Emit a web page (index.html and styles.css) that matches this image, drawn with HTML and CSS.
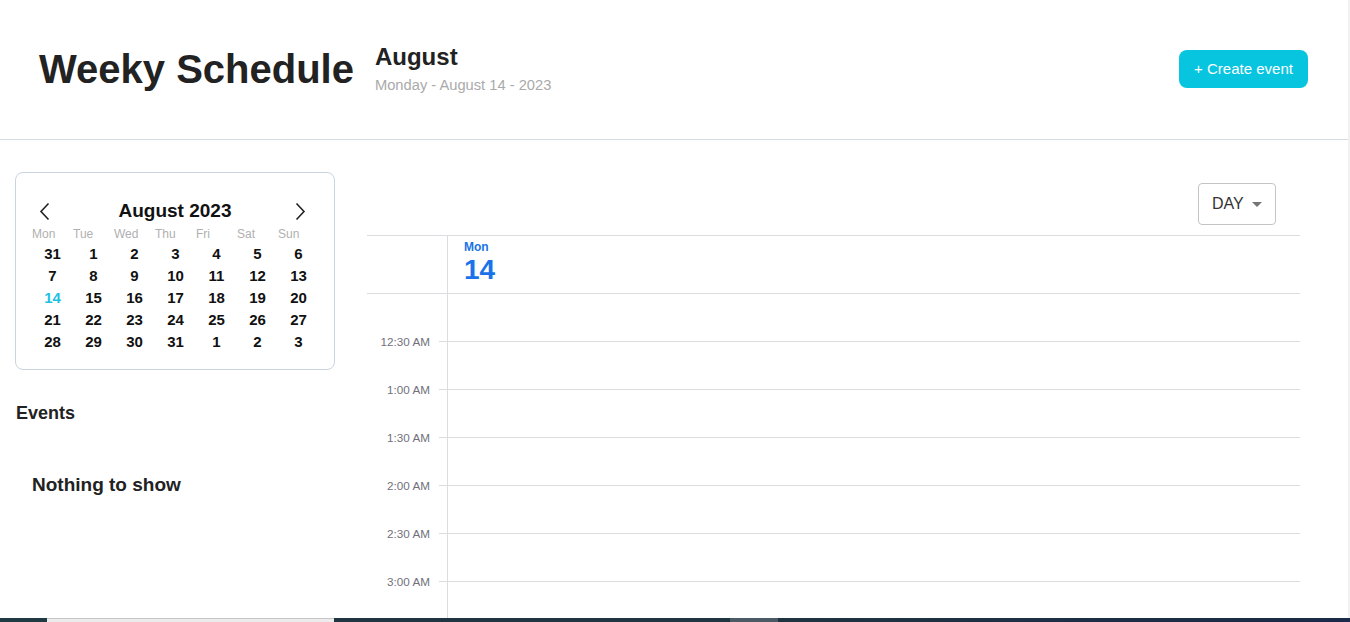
FILE: index.html
```html
<!DOCTYPE html>
<html lang="en">
<head>
<meta charset="utf-8">
<title>Weeky Schedule</title>
<link rel="stylesheet" href="styles.css">
</head>
<body>
<div class="app">
  <div class="screen">
    <div class="page">
      <header class="topbar">
        <div class="brand">
          <h1 class="title">Weeky Schedule</h1>
          <div class="date-block">
            <div class="month">August</div>
            <div class="date-sub">Monday - August 14 - 2023</div>
          </div>
        </div>
        <button class="create-btn">+ Create event</button>
      </header>
      <div class="content">
        <aside class="sidebar">
          <div class="mini-cal">
            <div class="cal-nav">
              <button class="nav-btn" aria-label="Previous month">
                <svg width="11" height="19" viewBox="0 0 11 19"><polyline points="9.5,1.5 2,9.5 9.5,17.5" fill="none" stroke="#222" stroke-width="1.6"/></svg>
              </button>
              <div class="cal-title">August 2023</div>
              <button class="nav-btn" aria-label="Next month">
                <svg width="11" height="19" viewBox="0 0 11 19"><polyline points="1.5,1.5 9,9.5 1.5,17.5" fill="none" stroke="#222" stroke-width="1.6"/></svg>
              </button>
            </div>
            <div class="cal-grid">
              <span class="wd">Mon</span><span class="wd">Tue</span><span class="wd">Wed</span><span class="wd">Thu</span><span class="wd">Fri</span><span class="wd">Sat</span><span class="wd">Sun</span>
              <span class="d">31</span><span class="d">1</span><span class="d">2</span><span class="d">3</span><span class="d">4</span><span class="d">5</span><span class="d">6</span>
              <span class="d">7</span><span class="d">8</span><span class="d">9</span><span class="d">10</span><span class="d">11</span><span class="d">12</span><span class="d">13</span>
              <span class="d today">14</span><span class="d">15</span><span class="d">16</span><span class="d">17</span><span class="d">18</span><span class="d">19</span><span class="d">20</span>
              <span class="d">21</span><span class="d">22</span><span class="d">23</span><span class="d">24</span><span class="d">25</span><span class="d">26</span><span class="d">27</span>
              <span class="d">28</span><span class="d">29</span><span class="d">30</span><span class="d">31</span><span class="d">1</span><span class="d">2</span><span class="d">3</span>
            </div>
          </div>
          <h2 class="events-title">Events</h2>
          <p class="empty">Nothing to show</p>
        </aside>
        <main class="scheduler">
          <div class="toolbar">
            <button class="view-select">DAY <span class="caret"></span></button>
          </div>
          <div class="grid">
            <div class="grid-head">
              <div class="gutter"></div>
              <div class="day-head">
                <div class="dow">Mon</div>
                <div class="dom">14</div>
              </div>
            </div>
            <div class="grid-body">
              <div class="row"><span class="tlabel">12:30 AM</span><span class="tick"></span><span class="slot"></span></div>
              <div class="row"><span class="tlabel">1:00 AM</span><span class="tick"></span><span class="slot"></span></div>
              <div class="row"><span class="tlabel">1:30 AM</span><span class="tick"></span><span class="slot"></span></div>
              <div class="row"><span class="tlabel">2:00 AM</span><span class="tick"></span><span class="slot"></span></div>
              <div class="row"><span class="tlabel">2:30 AM</span><span class="tick"></span><span class="slot"></span></div>
              <div class="row"><span class="tlabel">3:00 AM</span><span class="tick"></span><span class="slot"></span></div>
              <div class="row"><span class="tlabel tlabel-last">3:30 AM</span><span class="tick"></span><span class="slot"></span></div>
            </div>
          </div>
        </main>
      </div>
    </div>
    <div class="scroll-edge"></div>
  </div>
  <div class="taskbar">
    <span class="tb-a"></span><span class="tb-b"></span><span class="tb-c"></span><span class="tb-d"></span><span class="tb-e"></span>
  </div>
</div>
</body>
</html>
```

FILE: styles.css
```css
* { box-sizing: border-box; }
html, body { margin: 0; padding: 0; }
body {
  font-family: "Liberation Sans", Arial, sans-serif;
  color: #222;
  background: #fff;
  overflow: hidden;
}
button { font-family: inherit; cursor: pointer; }

.app { display: flex; flex-direction: column; height: 622px; width: 1350px; }
.screen { flex: 1; display: flex; min-height: 0; overflow: hidden; }
.page { flex: 1; min-width: 0; display: flex; flex-direction: column; }
.scroll-edge { width: 2px; background: #f1f1f1; }

/* header */
.topbar {
  box-sizing: content-box;
  height: 137px;
  border-bottom: 1px solid #d3dbe3;
  display: flex;
  align-items: center;
  justify-content: space-between;
  padding: 0 40px 2px 39px;
}
.brand { display: flex; align-items: center; gap: 21px; }
.title { margin: 0; font-size: 40px; line-height: 46px; font-weight: 700; color: #222; }
.date-block { display: flex; flex-direction: column; gap: 6px; }
.month { font-size: 24px; line-height: 28px; font-weight: 700; color: #222; }
.date-sub { font-size: 14.7px; line-height: 17px; color: #aaa; }
.create-btn {
  height: 38px;
  width: 129px;
  border: none;
  border-radius: 8px;
  background: #07c5df;
  color: #fff;
  font-size: 15px;
  padding: 0;
}

/* content */
.content { flex: 1; min-height: 0; display: flex; padding: 32px 0 0 15px; overflow: hidden; }
.sidebar { width: 320px; flex-shrink: 0; }

.mini-cal {
  border: 1px solid #c8d4e0;
  border-radius: 8px;
  padding: 26px 15px 16px 16px;
}
.cal-nav { display: flex; align-items: center; justify-content: space-between; height: 24px; padding-right: 6px; }
.nav-btn { width: 24px; height: 24px; border: none; background: none; padding: 0; display: flex; align-items: center; justify-content: center; }
.cal-title { font-size: 19px; font-weight: 700; color: #111; line-height: 24px; padding-left: 5px; }
.cal-grid {
  display: grid;
  grid-template-columns: repeat(7, 41px);
  grid-template-rows: 16px;
  grid-auto-rows: 22px;
  margin-top: 4px;
}
.wd { font-size: 12px; line-height: 14px; height: 14px; color: #b0b0b0; text-align: left; align-self: start; }
.d { font-size: 15px; font-weight: 700; color: #111; text-align: center; line-height: 22px; }
.d.today { color: #1cc2e2; }

.events-title { margin: 32px 0 0 1px; font-size: 18px; line-height: 22px; font-weight: 700; color: #222; }
.empty { margin: 50px 0 0 17px; font-size: 19px; line-height: 22px; font-weight: 700; color: #222; }

/* scheduler */
.scheduler { margin-left: 32px; width: 933px; flex-shrink: 0; overflow: hidden; }
.toolbar { display: flex; justify-content: flex-end; padding-right: 24px; margin-top: 11px; margin-bottom: 10px; }
.view-select {
  height: 42px;
  width: 78px;
  border: 1px solid #c4c4c4;
  border-radius: 4px;
  background: #fff;
  color: #333;
  font-size: 16px;
  display: flex;
  align-items: center;
  justify-content: space-between;
  padding: 0 13px 0 13px;
}
.caret {
  width: 0; height: 0;
  border-left: 5px solid transparent;
  border-right: 5px solid transparent;
  border-top: 5px solid #757575;
}

.grid { border-top: 1px solid #dadce0; }
.grid-head { display: flex; height: 58px; border-bottom: 1px solid #dadce0; }
.gutter { width: 80px; flex-shrink: 0; }
.day-head { flex: 1; border-left: 1px solid #dadce0; padding: 4px 0 0 16px; }
.dow { font-size: 12px; line-height: 14px; font-weight: 700; color: #1a73e8; }
.dom { font-size: 28px; line-height: 32px; font-weight: 700; color: #1a73e8; }

.row { display: grid; grid-template-columns: 72px 8px 1fr; height: 48px; }
.tlabel {
  align-self: end;
  font-size: 11.7px;
  line-height: 13px;
  color: #72707c;
  text-align: right;
  padding-right: 9px;
  margin-bottom: -6px;
}
.tlabel-last { visibility: hidden; }
.tick { border-bottom: 1px solid #dadce0; }
.slot { border-left: 1px solid #dadce0; border-bottom: 1px solid #dadce0; }

/* bottom strip */
.taskbar { height: 4px; display: flex; }
.taskbar span { display: block; height: 4px; }
.tb-a { width: 47px; background: #203a43; }
.tb-b { width: 287px; background: #ececec; border-top: 1px solid #c6c6c6; }
.tb-c { width: 396px; background: #1f3642; }
.tb-d { width: 48px; background: #4b5a65; }
.tb-e { flex: 1; background: linear-gradient(90deg, #1e3441, #1b2a48); }
```
